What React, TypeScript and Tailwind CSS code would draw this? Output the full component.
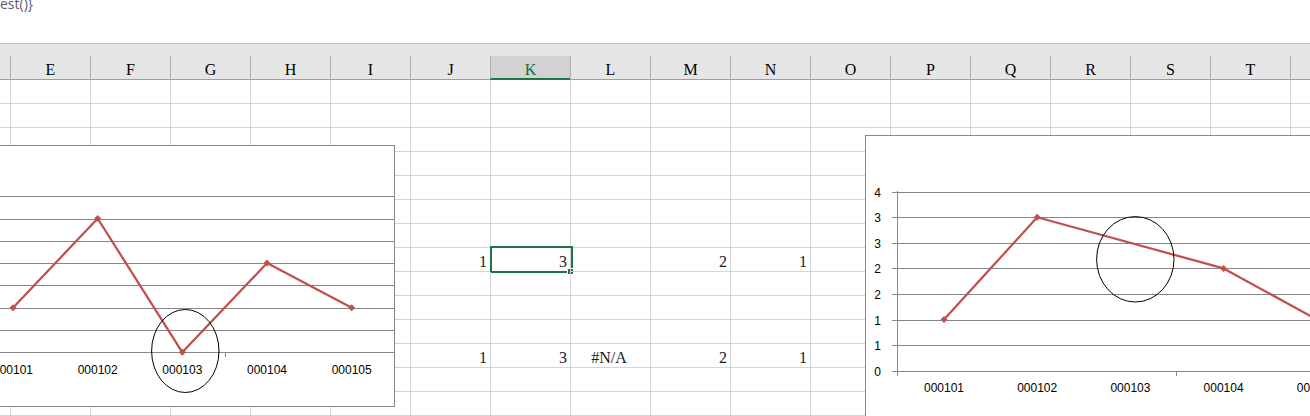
const COLS = ['D', 'E', 'F', 'G', 'H', 'I', 'J', 'K', 'L', 'M', 'N', 'O', 'P', 'Q', 'R', 'S', 'T', 'U'];
const ROW_COUNT = 14;
const ACTIVE_COL = 'K';
const ACTIVE_ROW = 7;

const cells: Record<number, Record<string, string>> = {
  7: { J: '1', K: '3', M: '2', N: '1' },
  11: { J: '1', K: '3', L: '#N/A', M: '2', N: '1' }
};

const labels = ['000101', '000102', '000103', '000104', '000105'];
const serif = { fontFamily: '"Liberation Serif", "Noto Sans CJK SC", serif' };

function Marker({ x, y }: { x: number; y: number }) {
  return <polygon points={`${x},${y - 3.5} ${x + 3.5},${y} ${x},${y + 3.5} ${x - 3.5},${y}`} fill="#c0504d" />;
}

function LeftChart() {
  const data = [1, 3, 0, 2, 1];
  const px = (i: number) => 13 + i * 84.67;
  const py = (v: number) => 352.3 - v * 44.6;
  const grid = [0, 0.5, 1, 1.5, 2, 2.5, 3, 3.5];
  return (
    <div className="absolute left-[-10px] top-[145px] h-[262px] w-[405px] overflow-hidden border border-[#878787] bg-white">
      <svg className="absolute -left-px -top-px h-[262px] w-[405px]" viewBox="-10 145 405 262" preserveAspectRatio="none">
        {grid.map((v) => (
          <line key={v} x1={-10} x2={395} y1={Math.round(py(v)) + 0.5} y2={Math.round(py(v)) + 0.5} stroke="#868686" />
        ))}
        <line x1={225.5} x2={225.5} y1={352} y2={357} stroke="#868686" />
        <polyline
          points={data.map((v, i) => `${px(i)},${py(v)}`).join(' ')}
          fill="none"
          stroke="#c0504d"
          strokeWidth={2.25}
          strokeLinejoin="round"
        />
        {data.map((v, i) => (
          <Marker key={i} x={px(i)} y={py(v)} />
        ))}
        {labels.map((l, i) => (
          <text key={l} x={px(i)} y={374} textAnchor="middle" fontSize={12} fill="#000" fontFamily='"Liberation Sans", Arial, sans-serif'>
            {l}
          </text>
        ))}
        <ellipse cx={185.3} cy={351} rx={33.7} ry={41.5} fill="none" stroke="#000" strokeWidth={1} />
      </svg>
    </div>
  );
}

function RightChart() {
  const data: (number | null)[] = [1, 3, null, 2, 1];
  const px = (i: number) => 944 + i * 93.2;
  const py = (v: number) => 370.7 - v * 51.14;
  const grid = [0, 0.5, 1, 1.5, 2, 2.5, 3, 3.5];
  const pts = data.map((v, i) => (v === null ? null : [px(i), py(v)])).filter(Boolean) as number[][];
  return (
    <div className="absolute left-[865px] top-[135px] h-[320px] w-[500px] overflow-hidden border border-[#878787] bg-white">
      <svg className="absolute -left-px -top-px h-[320px] w-[500px]" viewBox="865 135 500 320" preserveAspectRatio="none">
        {grid.map((v) => (
          <g key={v}>
            <line x1={892} x2={1365} y1={Math.round(py(v)) + 0.5} y2={Math.round(py(v)) + 0.5} stroke="#868686" />
            <text x={881} y={Math.round(py(v)) + 4.5} textAnchor="end" fontSize={12} fill="#000" fontFamily='"Liberation Sans", Arial, sans-serif'>
              {Math.round(v)}
            </text>
          </g>
        ))}
        <line x1={897.5} x2={897.5} y1={191} y2={376} stroke="#868686" />
        <line x1={1176.5} x2={1176.5} y1={371} y2={376} stroke="#868686" />
        <polyline points={pts.map((p) => p.join(',')).join(' ')} fill="none" stroke="#c0504d" strokeWidth={2.25} strokeLinejoin="round" />
        {pts.map((p, i) => (
          <Marker key={i} x={p[0]} y={p[1]} />
        ))}
        {labels.map((l, i) => (
          <text key={l} x={px(i)} y={392} textAnchor="middle" fontSize={12} fill="#000" fontFamily='"Liberation Sans", Arial, sans-serif'>
            {l}
          </text>
        ))}
        <ellipse cx={1135.3} cy={259.3} rx={38.7} ry={42.7} fill="none" stroke="#000" strokeWidth={1} />
      </svg>
    </div>
  );
}

export default function App() {
  return (
    <div className="relative h-[416px] w-[1310px] overflow-hidden bg-white">
      <div className="h-[44px] overflow-hidden border-b border-[#bdbdbd] bg-white">
        <div className="-mt-[6px] text-[14px] leading-[20px] text-[#566074]" style={{ fontFamily: '"Open Sans", sans-serif' }}>
          {'est()}'}
        </div>
      </div>

      <div className="h-[12px] bg-[#e6e6e6]" />
      <div className="-ml-[70px] flex h-[24px] bg-[#e6e6e6]" style={serif}>
        {COLS.map((c) => (
          <div
            key={c}
            className={
              c === ACTIVE_COL
                ? 'h-[24px] w-[80px] shrink-0 border-b-2 border-l border-b-[#217346] border-l-[#b0b0b0] bg-[#d2d2d2] text-center text-[16px] leading-[27px] text-[#1d6b45]'
                : 'h-[24px] w-[80px] shrink-0 border-b border-l border-b-[#9e9e9e] border-l-[#b0b0b0] text-center text-[16px] leading-[27px] text-black'
            }
          >
            {c}
          </div>
        ))}
      </div>

      {Array.from({ length: ROW_COUNT }, (_, r) => (
        <div key={r} className="-ml-[70px] flex h-[24px]" style={serif}>
          {COLS.map((c) => {
            const value = cells[r]?.[c];
            const isError = value?.startsWith('#');
            return (
              <div
                key={c}
                className={`relative h-[24px] w-[80px] shrink-0 border-b border-l border-[#d4d4d4] pr-[3px] text-[16px] leading-[27px] text-[#1a1a1a] ${
                  isError ? 'text-center' : 'text-right'
                }`}
              >
                {value}
                {r === ACTIVE_ROW && c === ACTIVE_COL && (
                  <>
                    <div className="absolute -left-px -top-[2px] h-[27px] w-[83px] border-2 border-[#217346]" />
                    <div className="absolute left-[76px] top-[20px] h-[7px] w-[7px] border border-white bg-[#217346]" />
                  </>
                )}
              </div>
            );
          })}
        </div>
      ))}

      <LeftChart />
      <RightChart />
    </div>
  );
}
